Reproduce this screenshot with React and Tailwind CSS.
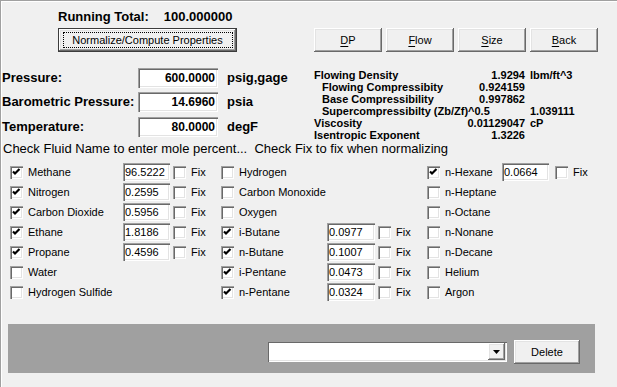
const sunken =
  "bg-white shadow-[inset_1px_1px_0_#a0a0a0,inset_2px_2px_0_#696969,inset_-1px_-1px_0_#ffffff,inset_-2px_-2px_0_#e3e3e3]";
const raised =
  "bg-[#f0f0f0] shadow-[inset_-1px_-1px_0_#696969,inset_1px_1px_0_#ffffff,inset_-2px_-2px_0_#a0a0a0,inset_2px_2px_0_#e3e3e3]";

const info = [
  { label: "Flowing Density", value: "1.9294", unit: "lbm/ft^3" },
  { label: "Flowing Compressibity", indent: true, value: "0.924159" },
  { label: "Base Compressibility", indent: true, value: "0.997862" },
  { label: "Supercompressibilty (Zb/Zf)^0.5", indent: true, value: "", unit: "1.039111" },
  { label: "Viscosity", value: "0.01129047", unit: "cP" },
  { label: "Isentropic Exponent", value: "1.3226" },
];

const fluids = [
  [{ n: "Methane", on: true, v: "96.5222" }, { n: "Hydrogen" }, { n: "n-Hexane", on: true, v: "0.0664" }],
  [{ n: "Nitrogen", on: true, v: "0.2595" }, { n: "Carbon Monoxide" }, { n: "n-Heptane" }],
  [{ n: "Carbon Dioxide", on: true, v: "0.5956" }, { n: "Oxygen" }, { n: "n-Octane" }],
  [{ n: "Ethane", on: true, v: "1.8186" }, { n: "i-Butane", on: true, v: "0.0977" }, { n: "n-Nonane" }],
  [{ n: "Propane", on: true, v: "0.4596" }, { n: "n-Butane", on: true, v: "0.1007" }, { n: "n-Decane" }],
  [{ n: "Water" }, { n: "i-Pentane", on: true, v: "0.0473" }, { n: "Helium" }],
  [{ n: "Hydrogen Sulfide" }, { n: "n-Pentane", on: true, v: "0.0324" }, { n: "Argon" }],
];

// per column: where the name cell starts, and the spacing of input / fix box
const cols = [
  { name: "w-[121px] pl-[8px]", entry: "w-[98px]", box: "w-[47px]", fix: "ml-[3px]" },
  { name: "w-[106px]", entry: "w-[100px]", box: "w-[48px]", fix: "ml-[3px]" },
  { name: "w-[75px]", entry: "w-[110px]", box: "w-[47px]", fix: "ml-[6px]" },
];

function Check({ on }) {
  return (
    <span className={`relative block w-[13px] h-[13px] shrink-0 ${sunken}`}>
      {on && (
        <svg className="absolute left-0 top-0" width="13" height="13" viewBox="0 0 13 13">
          <path d="M3 5.5 L5 7.5 L9.5 3" stroke="#000" strokeWidth="2.2" fill="none" />
        </svg>
      )}
    </span>
  );
}

function Btn({ first, rest }) {
  return (
    <div className={`w-[68px] h-[24px] flex items-center justify-center text-[11px] ${raised}`}>
      <span className="underline underline-offset-2">{first}</span>
      {rest}
    </div>
  );
}

export default function App() {
  return (
    <div className="w-[617px] h-[387px] overflow-hidden bg-[#f0f0f0] pt-[2px] pl-[2px] shadow-[inset_1px_1px_0_#a0a0a0,inset_2px_2px_0_#ffffff] font-['Liberation_Sans',Arial,sans-serif] text-black">
      {/* top: running total + buttons */}
      <div className="flex items-start pt-[7px]">
        <div className="ml-[56px] w-[179px] flex flex-col">
          <div className="h-[16px] leading-[16px] text-[13px] font-bold whitespace-nowrap">
            <span className="mr-[15px]">Running Total:</span>
            <span>100.000000</span>
          </div>
          <div className="mt-[3px] h-[24px] border border-[#3c3c3c] bg-[#f0f0f0] p-[0px]">
            <div className={`w-full h-full flex items-center justify-center ${raised}`}>
              <div className="w-[170px] h-[16px] border border-dotted border-black flex items-center justify-center text-[11px]">
                Normalize/Compute Properties
              </div>
            </div>
          </div>
        </div>
        <div className="ml-[77px] mt-[19px] flex gap-[4px]">
          <Btn first="D" rest="P" />
          <Btn first="F" rest="low" />
          <Btn first="S" rest="ize" />
          <Btn first="B" rest="ack" />
        </div>
      </div>

      {/* pressure inputs + computed properties */}
      <div className="flex items-start mt-[16px]">
        <div className="w-[312px] flex flex-col">
          {[
            ["Pressure:", "600.0000", "psig,gage", ""],
            ["Barometric Pressure:", "14.6960", "psia", "mt-[4px]"],
            ["Temperature:", "80.0000", "degF", "mt-[5px]"],
          ].map(([label, value, unit, mt]) => (
            <div key={label} className={`flex items-center h-[20px] ${mt}`}>
              <div className="w-[136px] text-[13px] font-bold whitespace-nowrap">{label}</div>
              <div className={`w-[80px] h-[20px] flex items-center justify-end pr-[3px] text-[12px] font-bold ${sunken}`}>
                {value}
              </div>
              <div className="ml-[9px] text-[13px] font-bold">{unit}</div>
            </div>
          ))}
        </div>
        <div className="mt-[1px] flex flex-col text-[11px] leading-[12px] font-bold">
          {info.map((r) => (
            <div key={r.label} className="flex h-[12px] whitespace-nowrap">
              <div className={`w-[211px] flex justify-between ${r.indent ? "pl-[8px]" : ""}`}>
                <span>{r.label}</span>
                <span>{r.value}</span>
              </div>
              <span className="ml-[5px]">{r.unit}</span>
            </div>
          ))}
        </div>
      </div>

      <div className="text-[13px] leading-[15px] pl-[1px] whitespace-nowrap">
        Check Fluid Name to enter mole percent...&nbsp;&nbsp;Check Fix to fix when normalizing
      </div>

      {/* fluid list */}
      <div className="mt-[6px] flex flex-col text-[11px]">
        {fluids.map((row, i) => (
          <div key={i} className="flex h-[20px] items-center">
            {row.map((f, j) => (
              <div key={f.n} className="flex items-center">
                <div className={`flex items-center ${cols[j].name}`}>
                  <Check on={f.on} />
                  <span className="ml-[5px] whitespace-nowrap">{f.n}</span>
                </div>
                <div className={`flex items-center ${cols[j].entry}`}>
                  {f.v && (
                    <>
                      <div className={`h-[18px] flex items-center pl-[2px] ${cols[j].box} ${sunken}`}>{f.v}</div>
                      <span className={cols[j].fix}>
                        <Check />
                      </span>
                      <span className="ml-[5px]">Fix</span>
                    </>
                  )}
                </div>
              </div>
            ))}
          </div>
        ))}
      </div>

      {/* bottom panel */}
      <div className="mt-[22px] ml-[6px] w-[587px] h-[49px] bg-[#a0a0a0] flex justify-end items-start pt-[16px] pr-[15px]">
        <div className={`mt-[1px] w-[240px] h-[21px] flex justify-end p-[2px] ${sunken}`}>
          <div className={`w-[17px] h-full flex items-center justify-center ${raised}`}>
            <svg width="7" height="4" viewBox="0 0 7 4">
              <path d="M0 0 H7 L3.5 4 Z" fill="#000" />
            </svg>
          </div>
        </div>
        <div className={`ml-[7px] w-[66px] h-[24px] flex items-center justify-center text-[11px] ${raised}`}>
          Delete
        </div>
      </div>
    </div>
  );
}
